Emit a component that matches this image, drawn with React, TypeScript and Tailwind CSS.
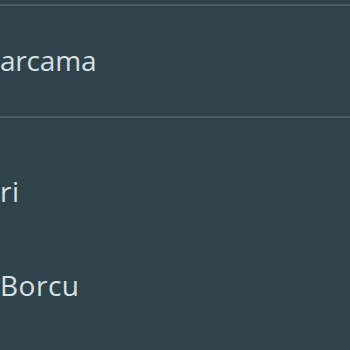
export default function App() {
  return (
    <div className="w-[350px] h-[350px] overflow-hidden bg-[#2f434b] text-[#d8e0e3]" style={{ fontFamily: "'Open Sans', sans-serif" }}>
      <div className="h-[4px]" />
      <div className="h-[2px] bg-[#4a5d65]" />
      <div className="h-[110px] flex items-center">
        <span className="text-[28px] leading-none tracking-[-0.2px] -mt-[2px]">arcama</span>
      </div>
      <div className="h-[2px] bg-[#4a5d65]" />
      <div className="h-[146px] flex items-center">
        <span className="text-[28px] leading-none tracking-[0.5px]">ri</span>
      </div>
      <div className="flex pt-[7px]">
        <span className="text-[28px] leading-none tracking-[0.5px]">Borcu</span>
      </div>
    </div>
  );
}
